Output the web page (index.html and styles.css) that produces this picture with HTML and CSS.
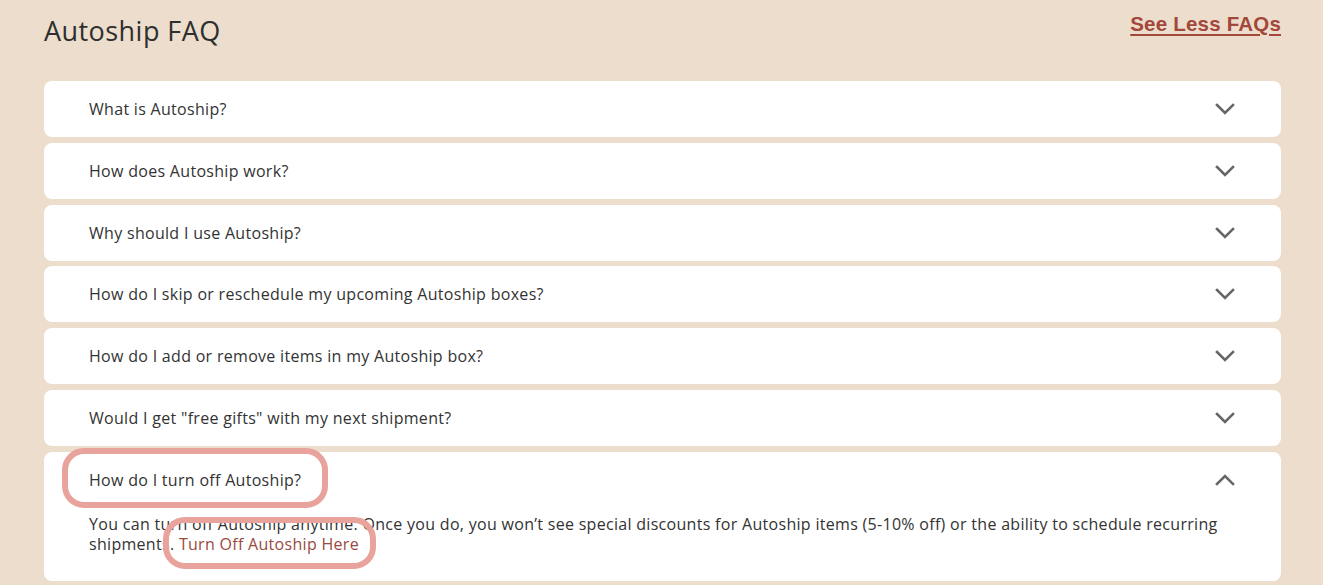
FILE: index.html
```html
<!DOCTYPE html>
<html lang="en">
<head>
<meta charset="utf-8">
<title>Autoship FAQ</title>
<link rel="stylesheet" href="styles.css">
</head>
<body>
<main class="faq">
  <header class="faq-head">
    <h2 class="faq-title">Autoship FAQ</h2>
    <a class="faq-toggle" href="#">See Less FAQs</a>
  </header>
  <ul class="faq-list">
    <li class="faq-item"><div class="faq-q"><span>What is Autoship?</span><svg class="chev" viewBox="0 0 20 12"><path d="M2 2l8 8 8-8"/></svg></div></li>
    <li class="faq-item"><div class="faq-q"><span>How does Autoship work?</span><svg class="chev" viewBox="0 0 20 12"><path d="M2 2l8 8 8-8"/></svg></div></li>
    <li class="faq-item"><div class="faq-q"><span>Why should I use Autoship?</span><svg class="chev" viewBox="0 0 20 12"><path d="M2 2l8 8 8-8"/></svg></div></li>
    <li class="faq-item"><div class="faq-q"><span>How do I skip or reschedule my upcoming Autoship boxes?</span><svg class="chev" viewBox="0 0 20 12"><path d="M2 2l8 8 8-8"/></svg></div></li>
    <li class="faq-item"><div class="faq-q"><span>How do I add or remove items in my Autoship box?</span><svg class="chev" viewBox="0 0 20 12"><path d="M2 2l8 8 8-8"/></svg></div></li>
    <li class="faq-item"><div class="faq-q"><span>Would I get "free gifts" with my next shipment?</span><svg class="chev" viewBox="0 0 20 12"><path d="M2 2l8 8 8-8"/></svg></div></li>
    <li class="faq-item open">
      <div class="faq-q"><span class="ring-wrap">How do I turn off Autoship?<span class="ring ring-q"></span></span><svg class="chev" viewBox="0 0 20 12"><path d="M2 10l8-8 8 8"/></svg></div>
      <p class="faq-a">You can turn off Autoship anytime. Once you do, you won’t see special discounts for Autoship items (5-10% off) or the ability to schedule recurring shipments. <a class="ring-wrap faq-link" href="#">Turn Off Autoship Here<span class="ring ring-a"></span></a></p>
    </li>
  </ul>
</main>
</body>
</html>
```

FILE: styles.css
```css
* { box-sizing: border-box; }
html, body { margin: 0; padding: 0; }
body {
  background: #ecddcc;
  font-family: "Open Sans", "Noto Sans", sans-serif;
  color: #333;
  width: 1323px;
  height: 585px;
  overflow: hidden;
}
.faq { padding: 0 42px 0 44px; }
.faq-head {
  display: flex;
  justify-content: space-between;
  align-items: flex-start;
  height: 81px;
}
.faq-title {
  margin: 14px 0 0;
  font-weight: 400;
  font-size: 27px;
  line-height: 34px;
  color: #2f2f2f;
  letter-spacing: 0.45px;
}
.faq-toggle {
  margin-top: 11px;
  font-family: "Liberation Sans", Arial, sans-serif;
  font-weight: 700;
  font-size: 20.5px;
  line-height: 26px;
  color: #a3473b;
  text-decoration: underline;
  text-decoration-thickness: 2px;
  text-underline-offset: 3px;
  letter-spacing: 0.2px;
}
.faq-list {
  list-style: none;
  margin: 0;
  padding: 0;
  display: flex;
  flex-direction: column;
  gap: 5.83px;
}
.faq-item {
  background: #fff;
  border-radius: 8px;
}
.faq-q {
  height: 56px;
  display: flex;
  align-items: center;
  justify-content: space-between;
  padding: 0 46px 0 45px;
  font-size: 16px;
  letter-spacing: 0.3px;
  color: #333;
}
.chev {
  width: 20px;
  height: 12px;
  fill: none;
  stroke: #666;
  stroke-width: 2.6;
  stroke-linecap: square;
}
.faq-item.open { padding-bottom: 27px; }
.faq-a {
  margin: 6px 0 0;
  padding: 0 44px 0 45px;
  font-size: 16px;
  line-height: 20px;
  letter-spacing: 0.3px;
  color: #333;
}
.faq-link {
  color: #9a4a3e;
  text-decoration: none;
}
.ring-wrap { position: relative; }
.ring {
  position: absolute;
  border: 6px solid #e8a39c;
  border-radius: 22px;
  pointer-events: none;
}
.ring-q { left: -27px; right: -27px; top: -21px; bottom: -17px; }
.ring-a { left: -16px; right: -17px; top: -16px; bottom: -14px; }
```
